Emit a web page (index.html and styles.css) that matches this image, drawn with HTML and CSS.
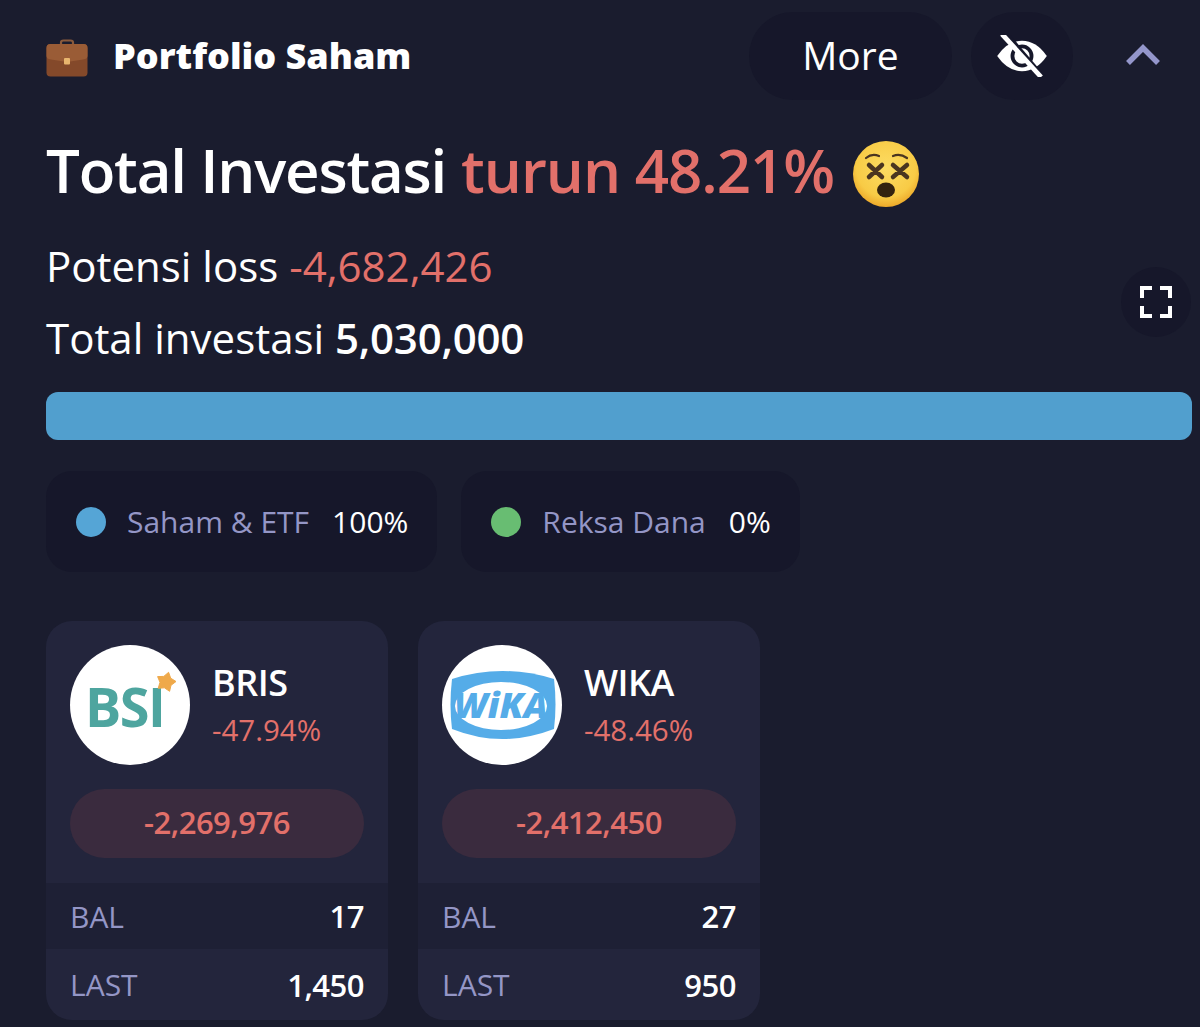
FILE: index.html
```html
<!DOCTYPE html>
<html lang="en">
<head>
    <meta charset="UTF-8">
    <meta name="viewport" content="width=device-width, initial-scale=1.0">
    <title>Portfolio Saham</title>
    <link rel="stylesheet" href="styles.css">
</head>
<body>
    <div class="header">
        <svg class="case-icon" viewBox="0 0 42 38">
            <path d="M15 7 V3.5 Q15 1.5 17.5 1.5 H24.5 Q27 1.5 27 3.5 V7" fill="none" stroke="#8a5a3c" stroke-width="2.2"/>
            <rect x="0.5" y="5" width="41" height="32.5" rx="4" fill="#84492a"/>
            <path d="M0.5 9 Q0.5 5 4.5 5 H37.5 Q41.5 5 41.5 9 V17 Q41.5 20 37 20.5 L21 23 L5 20.5 Q0.5 20 0.5 17 Z" fill="#9a5c36"/>
            <rect x="18" y="19" width="6" height="6.5" rx="1" fill="#e8b56e"/>
        </svg>
        <div class="header-title">Portfolio Saham</div>
        <div class="header-btn more-btn">More</div>
        <div class="header-btn eye-btn">
            <svg class="eye-icon" viewBox="0 0 52 44">
                <path d="M0 22 Q11 6 26 6 Q41 6 52 22 Q41 38 26 38 Q11 38 0 22 Z" fill="#fff"/>
                <circle cx="26" cy="22" r="10" fill="none" stroke="#16172a" stroke-width="4"/>
                <path d="M9 -1 L48 45" stroke="#16172a" stroke-width="6"/>
                <path d="M5 -1 L46 44" stroke="#fff" stroke-width="5"/>
            </svg>
        </div>
        <svg class="chevron" viewBox="0 0 34 22"><path d="M2 19 L17 4 L32 19" fill="none" stroke="#9496cb" stroke-width="5.5"/></svg>
    </div>

    <h1 class="title">
        <span>Total Investasi</span>
        <span class="loss">turun 48.21%</span>
        <svg class="face" viewBox="0 0 68 68">
            <defs>
                <radialGradient id="faceFill" cx="50%" cy="40%" r="60%">
                    <stop offset="0%" stop-color="#fcdc62"/>
                    <stop offset="75%" stop-color="#f8cb46"/>
                    <stop offset="100%" stop-color="#eda92a"/>
                </radialGradient>
            </defs>
            <circle cx="34" cy="34" r="33" fill="url(#faceFill)"/>
            <path d="M14 18 Q20 13 27 16 M41 16 Q48 13 55 18" fill="none" stroke="#4a3520" stroke-width="2.2" stroke-linecap="round"/>
            <path d="M17 25 L30 37 M30 25 L17 37 M41 37 L55 25 M41 25 L55 37" stroke="#4a3520" stroke-width="4.5" stroke-linecap="round"/>
            <ellipse cx="34" cy="50" rx="9" ry="7.5" fill="#33230f"/>
        </svg>
    </h1>

    <div class="summary">
        <div class="summary-line">Potensi loss <span class="loss">-4,682,426</span></div>
        <div class="summary-line">Total investasi <b>5,030,000</b></div>
        <div class="expand-btn">
            <svg class="expand-icon" viewBox="0 0 32 32">
                <path d="M2 12 V2 H12 M20 2 H30 V12 M30 20 V30 H20 M12 30 H2 V20" fill="none" stroke="#fff" stroke-width="4"/>
            </svg>
        </div>
    </div>

    <div class="alloc-bar"></div>

    <div class="legend">
        <div class="legend-item"><span class="dot dot-blue"></span><span class="legend-name">Saham &amp; ETF</span><span>100%</span></div>
        <div class="legend-item"><span class="dot dot-green"></span><span class="legend-name">Reksa Dana</span><span>0%</span></div>
    </div>

    <div class="cards">
        <div class="card">
            <div class="card-top">
                <div class="logo">
                    <svg viewBox="0 0 120 120">
                        <text class="bsi-text" x="15" y="82">BSI</text>
                        <path d="M98.6 27.3 L100.7 33.2 L106 36.5 L101 40.3 L99.6 46.3 L94.4 42.8 L88.2 43.3 L90 37.3 L87.6 31.6 L93.8 31.4 Z" fill="#efa94a" stroke="#efa94a" stroke-linejoin="round"/>
                    </svg>
                </div>
                <div>
                    <div class="code">BRIS</div>
                    <div class="pct">-47.94%</div>
                </div>
            </div>
            <div class="pill">-2,269,976</div>
            <div class="row row-dark"><span class="row-label">BAL</span><span class="row-val">17</span></div>
            <div class="row"><span class="row-label">LAST</span><span class="row-val">1,450</span></div>
        </div>
        <div class="card">
            <div class="card-top">
                <div class="logo">
                    <svg viewBox="0 0 120 120">
                        <path d="M10 34 Q60 18 112 34 Q115 60 112 84 Q60 104 10 84 Q7 60 10 34 Z" fill="#55ace8"/>
                        <ellipse cx="59" cy="61" rx="46" ry="24" fill="#fff"/>
                        <text class="wika-text" x="59" y="73" text-anchor="middle">WiKA</text>
                    </svg>
                </div>
                <div>
                    <div class="code">WIKA</div>
                    <div class="pct">-48.46%</div>
                </div>
            </div>
            <div class="pill">-2,412,450</div>
            <div class="row row-dark"><span class="row-label">BAL</span><span class="row-val">27</span></div>
            <div class="row"><span class="row-label">LAST</span><span class="row-val">950</span></div>
        </div>
    </div>
</body>
</html>
```

FILE: styles.css
```css
html, body {
    height: 100%;
}
body {
    margin: 0;
    padding: 12px 8px 0 46px;
    box-sizing: border-box;
    overflow: hidden;
    background-color: #1a1c2e;
    color: #fff;
    font-family: "Open Sans", sans-serif;
}
.header {
    display: flex;
    align-items: center;
    height: 88px;
}
.case-icon {
    width: 42px;
    height: 38px;
    margin-right: 25px;
    margin-top: 3px;
}
.header-title {
    font-size: 36px;
    font-weight: 800;
    flex: 1;
    margin-top: -2px;
}
.header-btn {
    height: 88px;
    border-radius: 44px;
    background-color: #16172a;
    display: flex;
    align-items: center;
    justify-content: center;
}
.more-btn {
    width: 203px;
    font-size: 39px;
    padding-bottom: 4px;
    box-sizing: border-box;
    margin-right: 19px;
}
.eye-btn {
    width: 102px;
    margin-right: 53px;
}
.eye-icon {
    width: 50px;
    height: 42px;
}
.chevron {
    width: 34px;
    height: 22px;
    margin-right: 32px;
    margin-top: -2px;
}
.title {
    margin: 29px 0 0;
    font-size: 60px;
    line-height: 82px;
    font-weight: 600;
    display: flex;
    align-items: center;
    gap: 15px;
    letter-spacing: -1.2px;
}
.title .loss {
    letter-spacing: -1px;
}
.loss {
    color: #e2706a;
}
.face {
    width: 68px;
    height: 68px;
    margin-top: 8px;
    margin-left: 3px;
}
.summary {
    position: relative;
    margin-top: 29px;
}
.summary-line {
    font-size: 42px;
    line-height: 52px;
    margin-bottom: 20px;
}
.summary-line b {
    font-weight: 600;
    letter-spacing: -0.2px;
}
.expand-btn {
    position: absolute;
    right: 1px;
    top: 27px;
    width: 70px;
    height: 70px;
    border-radius: 50%;
    background-color: #16172a;
    display: flex;
    align-items: center;
    justify-content: center;
}
.expand-icon {
    width: 32px;
    height: 32px;
}
.alloc-bar {
    height: 48px;
    margin-top: 28px;
    border-radius: 12px;
    background-color: #519fce;
}
.legend {
    display: flex;
    gap: 24px;
    margin-top: 31px;
}
.legend-item {
    height: 101px;
    padding: 0 29px 0 30px;
    border-radius: 26px;
    background-color: #16172a;
    display: flex;
    align-items: center;
    font-size: 30px;
}
.dot {
    width: 30px;
    height: 30px;
    border-radius: 50%;
    margin-right: 21px;
}
.dot-blue {
    background-color: #55a5d6;
}
.dot-green {
    background-color: #68bd72;
}
.legend-name {
    color: #9496c6;
    margin-right: 23px;
}
.cards {
    display: flex;
    gap: 30px;
    margin-top: 49px;
}
.card {
    width: 342px;
    height: 399px;
    border-radius: 26px;
    background-color: #23253c;
    overflow: hidden;
}
.card-top {
    display: flex;
    align-items: center;
    gap: 22px;
    padding: 24px 24px 0;
}
.logo {
    width: 120px;
    height: 120px;
    border-radius: 50%;
    background-color: #fff;
}
.logo svg {
    display: block;
    width: 120px;
    height: 120px;
}
.bsi-text {
    font-family: "Open Sans", sans-serif;
    font-size: 54px;
    font-weight: 700;
    letter-spacing: -1.5px;
    fill: #4ea59f;
}
.wika-text {
    font-family: "Open Sans", sans-serif;
    font-size: 36px;
    font-weight: 800;
    font-style: italic;
    fill: #55ace8;
}
.code {
    font-size: 36px;
    line-height: 50px;
    font-weight: 600;
    letter-spacing: -0.5px;
}
.pct {
    font-size: 29.5px;
    line-height: 44px;
    color: #e2706a;
}
.pill {
    height: 66px;
    padding-bottom: 3px;
    margin: 24px 24px 25px;
    border-radius: 35px;
    background-color: #3a2b3e;
    color: #e2706a;
    font-size: 31px;
    font-weight: 600;
    display: flex;
    align-items: center;
    justify-content: center;
    letter-spacing: -0.5px;
}
.row {
    height: 71px;
    padding: 0 24px;
    display: flex;
    align-items: center;
    justify-content: space-between;
}
.row-dark {
    height: 66px;
    background-color: #1e2035;
}
.row-label {
    color: #9496c6;
    font-size: 30px;
}
.row-val {
    font-size: 31px;
    font-weight: 600;
    letter-spacing: -0.5px;
}
```
